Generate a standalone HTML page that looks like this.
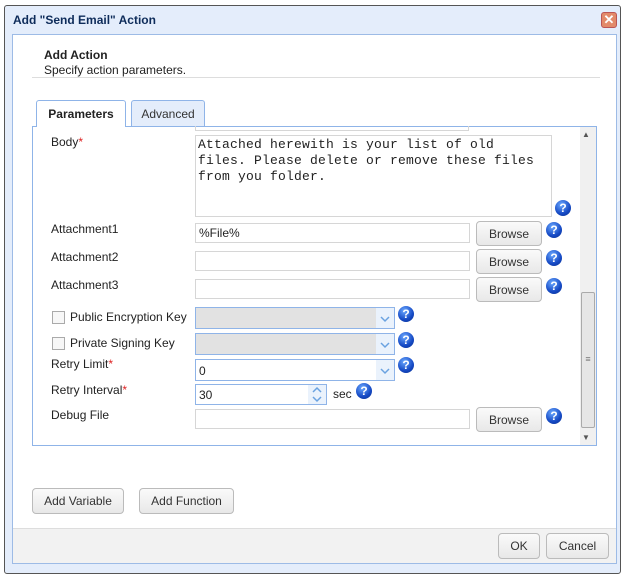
<!DOCTYPE html>
<html><head><style>
*{box-sizing:border-box;margin:0;padding:0}
body{width:626px;height:578px;background:#fff;font-family:"Liberation Sans",sans-serif;font-size:12px;color:#222;position:relative;overflow:hidden}
.a{position:absolute}
.win{left:4px;top:5px;width:617px;height:569px;background:#e4edfb;border:1px solid #555;border-radius:3px}
.content{left:12px;top:34px;width:605px;height:530px;background:#fff;border:1px solid #9dbbe6}
.foot{left:13px;top:528px;width:603px;height:35px;background:#f2f2f2;border-top:1px solid #ddd}
.inp{background:#fff;border:1px solid #d6d6d6;height:20px;padding:2px 3px;font-size:12px}
.btn{background:linear-gradient(#fafafa,#e8e8e8);border:1px solid #bbb;border-radius:4px;text-align:center;font-size:12px;color:#333}
.help{width:16px;height:16px;border-radius:50%;background:radial-gradient(circle at 40% 30%,#6aa8ff,#1549c4 60%,#0a2f8a);color:#fff;font-weight:bold;font-size:12px;text-align:center;line-height:16px}
.lbl{font-size:12px;color:#222}
.req{color:#d22}
.sel{border:1px solid #8fb4e8;height:22px}
.arrow{position:absolute;right:0;top:0;width:18px;height:20px;background:#eaf2fc}
.cb{width:13px;height:13px;border:1px solid #aaa;background:#f7f7f7}
</style></head><body>
<div class="a win"></div>
<div class="a" style="left:13px;top:13px;font-weight:bold;color:#0e2c5a">Add "Send Email" Action</div>
<div class="a" style="left:601px;top:12px;width:16px;height:16px;background:#e28a6a;border:1px solid #b55;border-radius:3px;color:#fff;font-weight:bold;font-size:13px;line-height:14px;text-align:center">✕</div>
<div class="a content"></div>
<div class="a" style="left:44px;top:48px;font-weight:bold">Add Action</div>
<div class="a" style="left:44px;top:63px">Specify action parameters.</div>
<div class="a" style="left:32px;top:77px;width:568px;height:1px;background:#ddd"></div>

<div class="a" style="left:32px;top:126px;width:565px;height:320px;border:1px solid #8fb4e8"></div>
<div class="a" style="left:36px;top:100px;width:90px;height:27px;border:1px solid #8fb4e8;border-bottom:none;background:#fff;border-radius:3px 3px 0 0;text-align:center;line-height:26px;font-weight:bold;color:#222">Parameters</div>
<div class="a" style="left:131px;top:100px;width:74px;height:26px;border:1px solid #8fb4e8;border-bottom:none;background:#e4edfb;border-radius:3px 3px 0 0;text-align:center;line-height:26px;color:#333">Advanced</div>

<div class="a" style="left:580px;top:127px;width:16px;height:318px;background:#f0f0f0"></div>
<div class="a" style="left:582px;top:130px;font-size:8px;color:#555">▲</div>
<div class="a" style="left:582px;top:433px;font-size:8px;color:#555">▼</div>
<div class="a" style="left:581px;top:292px;width:14px;height:136px;background:#e6e6e6;border:1px solid #aaa;border-radius:2px;text-align:center;line-height:132px;font-size:9px;color:#777">≡</div>

<div class="a" style="left:195px;top:126px;width:274px;height:5px;border:1px solid #d6d6d6;border-top:none"></div>
<div class="a lbl" style="left:51px;top:135px">Body<span class="req">*</span></div>
<div class="a" style="left:195px;top:135px;width:357px;height:82px;border:1px solid #d6d6d6;font-family:'Liberation Mono',monospace;font-size:13px;letter-spacing:0.2px;line-height:16px;padding:1px 2px;color:#222;white-space:nowrap">Attached herewith is your list of old<br>files. Please delete or remove these files<br>from you folder.</div>
<div class="a help" style="left:555px;top:200px">?</div>

<div class="a lbl" style="left:51px;top:222px">Attachment1</div>
<div class="a inp" style="left:195px;top:223px;width:275px">%File%</div>
<div class="a btn" style="left:476px;top:221px;width:66px;height:25px;line-height:24px">Browse</div>
<div class="a help" style="left:546px;top:222px">?</div>

<div class="a lbl" style="left:51px;top:250px">Attachment2</div>
<div class="a inp" style="left:195px;top:251px;width:275px"></div>
<div class="a btn" style="left:476px;top:249px;width:66px;height:25px;line-height:24px">Browse</div>
<div class="a help" style="left:546px;top:250px">?</div>

<div class="a lbl" style="left:51px;top:278px">Attachment3</div>
<div class="a inp" style="left:195px;top:279px;width:275px"></div>
<div class="a btn" style="left:476px;top:277px;width:66px;height:25px;line-height:24px">Browse</div>
<div class="a help" style="left:546px;top:278px">?</div>

<div class="a cb" style="left:52px;top:311px"></div>
<div class="a lbl" style="left:70px;top:310px">Public Encryption Key</div>
<div class="a sel" style="left:195px;top:307px;width:200px;background:#e2e2e2"><div class="arrow"><svg width="18" height="20"><path d="M5 9l4 4 4-4" stroke="#6aa2e0" stroke-width="1.5" fill="none"/></svg></div></div>
<div class="a help" style="left:398px;top:306px">?</div>

<div class="a cb" style="left:52px;top:337px"></div>
<div class="a lbl" style="left:70px;top:336px">Private Signing Key</div>
<div class="a sel" style="left:195px;top:333px;width:200px;background:#e2e2e2"><div class="arrow"><svg width="18" height="20"><path d="M5 9l4 4 4-4" stroke="#6aa2e0" stroke-width="1.5" fill="none"/></svg></div></div>
<div class="a help" style="left:398px;top:332px">?</div>

<div class="a lbl" style="left:51px;top:357px">Retry Limit<span class="req">*</span></div>
<div class="a sel" style="left:195px;top:359px;width:200px;background:#fff;padding:3px"><span style="position:relative;top:1px">0</span><div class="arrow"><svg width="18" height="20"><path d="M5 9l4 4 4-4" stroke="#6aa2e0" stroke-width="1.5" fill="none"/></svg></div></div>
<div class="a help" style="left:398px;top:357px">?</div>

<div class="a lbl" style="left:51px;top:383px">Retry Interval<span class="req">*</span></div>
<div class="a sel" style="left:195px;top:384px;width:132px;height:21px;background:#fff;padding:3px">30<div class="arrow" style="height:19px"><svg width="18" height="19"><path d="M5 7l4-4 4 4M5 12l4 4 4-4" stroke="#6aa2e0" stroke-width="1.5" fill="none"/></svg></div></div>
<div class="a lbl" style="left:333px;top:387px">sec</div>
<div class="a help" style="left:356px;top:383px">?</div>

<div class="a lbl" style="left:51px;top:408px">Debug File</div>
<div class="a inp" style="left:195px;top:409px;width:275px"></div>
<div class="a btn" style="left:476px;top:407px;width:66px;height:25px;line-height:24px">Browse</div>
<div class="a help" style="left:546px;top:408px">?</div>

<div class="a btn" style="left:32px;top:488px;width:92px;height:26px;line-height:25px">Add Variable</div>
<div class="a btn" style="left:139px;top:488px;width:95px;height:26px;line-height:25px">Add Function</div>

<div class="a foot"></div>
<div class="a btn" style="left:498px;top:533px;width:42px;height:26px;line-height:25px">OK</div>
<div class="a btn" style="left:546px;top:533px;width:63px;height:26px;line-height:25px">Cancel</div>
</body></html>
